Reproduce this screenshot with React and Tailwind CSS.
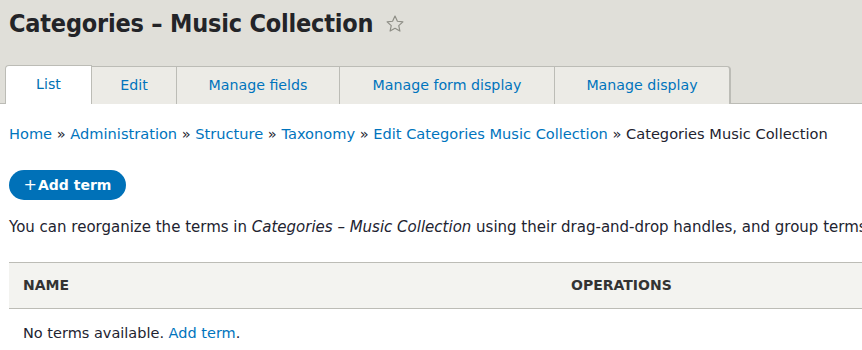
import React from "react";

const font = { fontFamily: '"DejaVu Sans", "Liberation Sans", sans-serif' };

function Star() {
  return (
    <svg width="20" height="20" viewBox="0 0 24 24" className="ml-[12px] mt-[2px]">
      <path
        d="M12 2.5l2.9 6.2 6.6.7-5 4.5 1.4 6.6L12 17.2l-5.9 3.3 1.4-6.6-5-4.5 6.6-.7z"
        fill="none"
        stroke="#8e8e86"
        strokeWidth="1.4"
        strokeLinejoin="round"
      />
    </svg>
  );
}

export default function App() {
  return (
    <div className="w-[862px] h-[350px] overflow-hidden bg-white" style={font}>
      <div className="bg-[#e0dfd9] border-b border-[#bcbcb6] pt-[8px]">
        <div className="flex items-center pl-[9px] h-[30px]">
          <h1
            className="text-[25px] font-bold text-[#232428] leading-none tracking-[-0.2px]"
            style={{ fontFamily: '"DejaVu Sans Condensed", "DejaVu Sans", sans-serif' }}
          >
            Categories – Music Collection
          </h1>
          <Star />
        </div>
        <div className="flex pl-[5px] mt-[27px] -mb-px">
          <div className="w-[87px] h-[39px] bg-white border border-b-0 border-[#bcbcb6] rounded-tl-[4px] flex items-center justify-center text-[14.2px] text-[#0071b3]">
            List
          </div>
          <div className="w-[85px] h-[38px] mt-[1px] bg-[#ecebe6] border-t border-r border-[#bcbcb6] flex items-center justify-center text-[14.2px] text-[#0074bd]">
            Edit
          </div>
          <div className="w-[163px] h-[38px] mt-[1px] bg-[#ecebe6] border-t border-r border-[#bcbcb6] flex items-center justify-center text-[14.2px] text-[#0074bd]">
            Manage fields
          </div>
          <div className="w-[215px] h-[38px] mt-[1px] bg-[#ecebe6] border-t border-r border-[#bcbcb6] flex items-center justify-center text-[14.2px] text-[#0074bd]">
            Manage form display
          </div>
          <div className="w-[176px] h-[38px] mt-[1px] bg-[#ecebe6] border-t border-r-2 border-[#bcbcb6] rounded-tr-[4px] flex items-center justify-center text-[14.2px] text-[#0074bd]">
            Manage display
          </div>
        </div>
      </div>

      <div className="pl-[9px] pt-[21px] text-[14.6px] leading-[18px] text-[#222330] whitespace-nowrap">
        <span className="text-[#0074bd]">Home</span> »{" "}
        <span className="text-[#0074bd]">Administration</span> »{" "}
        <span className="text-[#0074bd]">Structure</span> »{" "}
        <span className="text-[#0074bd]">Taxonomy</span> »{" "}
        <span className="text-[#0074bd]">Edit Categories Music Collection</span> » Categories Music Collection
      </div>

      <div className="pl-[9px] mt-[27px]">
        <div className="w-[117px] h-[30px] rounded-full bg-[#0071b8] text-white font-bold text-[14px] flex items-center justify-center">
          <span className="font-normal text-[16px] mr-[1px]">+</span>Add term
        </div>
      </div>

      <p className="pl-[9px] mt-[18px] text-[15px] leading-[18px] text-[#222330] whitespace-nowrap">
        You can reorganize the terms in <em>Categories – Music Collection</em> using their drag-and-drop handles, and group terms under a parent term.
      </p>

      <div className="ml-[9px] mt-[26px]">
        <div className="flex h-[47px] items-center bg-[#f3f3f0] border-y border-[#bcbcb6] text-[14px] font-bold text-[#333]">
          <div className="w-[548px] pl-[14px]">NAME</div>
          <div className="pl-[14px]">OPERATIONS</div>
        </div>
        <div className="pl-[14px] pt-[15px] text-[14.5px] leading-[18px] text-[#222330]">
          No terms available. <span className="text-[#0074bd]">Add term</span>.
        </div>
      </div>
    </div>
  );
}
